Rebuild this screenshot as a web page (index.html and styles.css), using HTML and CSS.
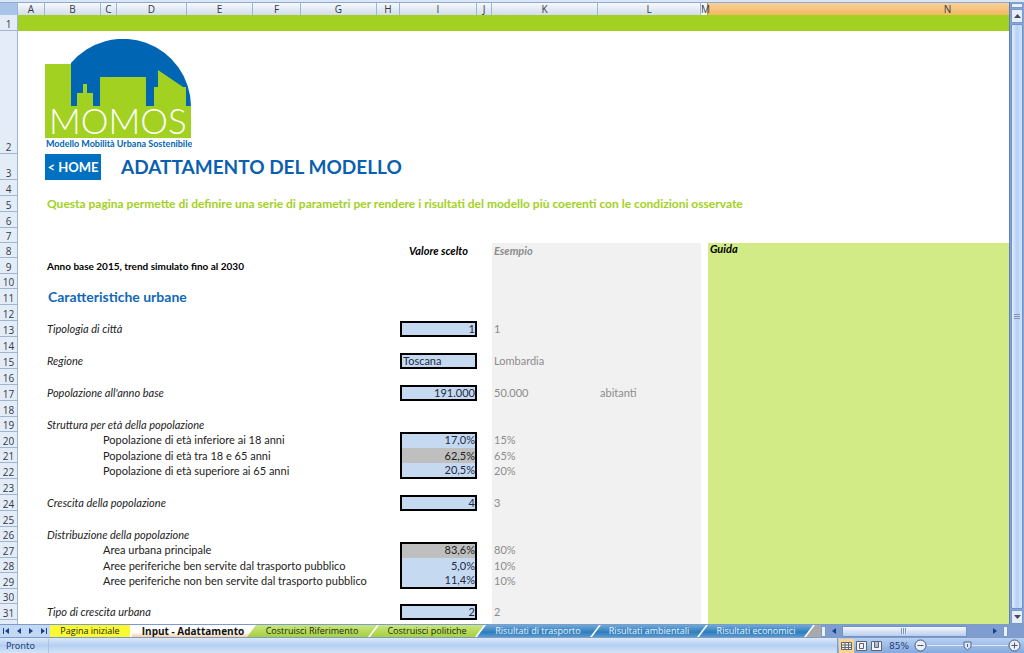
FILE: index.html
```html
<!DOCTYPE html>
<html lang="it">
<head>
<meta charset="utf-8">
<title>MOMOS - Adattamento del modello</title>
<link rel="stylesheet" href="styles.css">
</head>
<body>
<main class="workspace">
<div class="sheet">
<table class="grid">
<colgroup><col class="w-head"><col class="w-a"><col class="w-b"><col class="w-c"><col class="w-d"><col class="w-e"><col class="w-f"><col class="w-g"><col class="w-h"><col class="w-i"><col class="w-j"><col class="w-k"><col class="w-l"><col class="w-m"><col></colgroup>
<thead>
<tr><th class="corner"></th><th>A</th><th>B</th><th>C</th><th>D</th><th>E</th><th>F</th><th>G</th><th>H</th><th>I</th><th>J</th><th>K</th><th>L</th><th class="edge">M</th><th class="selected">N</th></tr>
</thead>
<tbody>
<tr><th>1</th><td colspan="14" class="band"></td></tr>
<tr class="r-logo"><th>2</th><td></td><td colspan="13" class="logo-cell">
<svg class="logo" viewBox="0 0 147 110" role="img" aria-label="MOMOS">
<path d="M26 67V24A68 68 0 0 1 146 67Z" fill="#0066b3"/>
<path d="M0 25H26V67H32V54H38V45H42V54H48V67H55V38H101V67H109V48H113V31L138 48H141V67H146V99H0Z" fill="#a2d122"/>
<text x="4" y="95" class="logo-name">MOMOS</text>
<text x="1" y="108" class="logo-tag">Modello Mobilità Urbana Sostenibile</text>
</svg></td></tr>
<tr class="r-title"><th>3</th><td></td><td class="home-cell"><a class="home" href="#">&lt; HOME</a></td><td></td><td colspan="11" class="title">ADATTAMENTO DEL MODELLO</td></tr>
<tr><th>4</th><td colspan="14"></td></tr>
<tr><th>5</th><td></td><td colspan="13" class="intro">Questa pagina permette di definire una serie di parametri per rendere i risultati del modello più coerenti con le condizioni osservate</td></tr>
<tr><th>6</th><td colspan="14"></td></tr>
<tr class="low"><th>7</th><td colspan="14"></td></tr>
<tr class="low"><th>8</th><td colspan="8"></td><td class="col-title">Valore scelto</td><td></td><td colspan="2" class="ex ex-title">Esempio</td><td></td><td class="guide">Guida</td></tr>
<tr><th>9</th><td></td><td colspan="9" class="strong">Anno base 2015, trend simulato fino al 2030</td><td colspan="2" class="ex"></td><td></td><td class="guide"></td></tr>
<tr class="low"><th>10</th><td colspan="10"></td><td colspan="2" class="ex"></td><td></td><td class="guide"></td></tr>
<tr><th>11</th><td></td><td colspan="9" class="section">Caratteristiche urbane</td><td colspan="2" class="ex"></td><td></td><td class="guide"></td></tr>
<tr><th>12</th><td colspan="10"></td><td colspan="2" class="ex"></td><td></td><td class="guide"></td></tr>
<tr><th>13</th><td></td><td colspan="7" class="label"><label for="tipologia">Tipologia di città</label></td><td class="box"><input id="tipologia" value="1"></td><td></td><td colspan="2" class="ex">1</td><td></td><td class="guide"></td></tr>
<tr><th>14</th><td colspan="10"></td><td colspan="2" class="ex"></td><td></td><td class="guide"></td></tr>
<tr><th>15</th><td></td><td colspan="7" class="label"><label for="regione">Regione</label></td><td class="box"><input id="regione" class="text" value="Toscana"></td><td></td><td colspan="2" class="ex">Lombardia</td><td></td><td class="guide"></td></tr>
<tr><th>16</th><td colspan="10"></td><td colspan="2" class="ex"></td><td></td><td class="guide"></td></tr>
<tr><th>17</th><td></td><td colspan="7" class="label"><label for="popolazione">Popolazione all'anno base</label></td><td class="box"><input id="popolazione" value="191.000"></td><td></td><td class="ex">50.000</td><td class="ex">abitanti</td><td></td><td class="guide"></td></tr>
<tr><th>18</th><td colspan="10"></td><td colspan="2" class="ex"></td><td></td><td class="guide"></td></tr>
<tr class="low"><th>19</th><td></td><td colspan="9" class="label">Struttura per età della popolazione</td><td colspan="2" class="ex"></td><td></td><td class="guide"></td></tr>
<tr><th>20</th><td colspan="2"></td><td colspan="6" class="sub"><label for="eta1">Popolazione di età inferiore ai 18 anni</label></td><td class="box"><input id="eta1" class="first" value="17,0%"></td><td></td><td colspan="2" class="ex">15%</td><td></td><td class="guide"></td></tr>
<tr class="low"><th>21</th><td colspan="2"></td><td colspan="6" class="sub"><label for="eta2">Popolazione di età tra 18 e 65 anni</label></td><td class="box"><input id="eta2" class="middle computed" value="62,5%" readonly></td><td></td><td colspan="2" class="ex">65%</td><td></td><td class="guide"></td></tr>
<tr><th>22</th><td colspan="2"></td><td colspan="6" class="sub"><label for="eta3">Popolazione di età superiore ai 65 anni</label></td><td class="box"><input id="eta3" class="last" value="20,5%"></td><td></td><td colspan="2" class="ex">20%</td><td></td><td class="guide"></td></tr>
<tr><th>23</th><td colspan="10"></td><td colspan="2" class="ex"></td><td></td><td class="guide"></td></tr>
<tr><th>24</th><td></td><td colspan="7" class="label"><label for="crescita">Crescita della popolazione</label></td><td class="box"><input id="crescita" value="4"></td><td></td><td colspan="2" class="ex">3</td><td></td><td class="guide"></td></tr>
<tr><th>25</th><td colspan="10"></td><td colspan="2" class="ex"></td><td></td><td class="guide"></td></tr>
<tr class="low"><th>26</th><td></td><td colspan="9" class="label">Distribuzione della popolazione</td><td colspan="2" class="ex"></td><td></td><td class="guide"></td></tr>
<tr><th>27</th><td colspan="2"></td><td colspan="6" class="sub"><label for="area1">Area urbana principale</label></td><td class="box"><input id="area1" class="first computed" value="83,6%" readonly></td><td></td><td colspan="2" class="ex">80%</td><td></td><td class="guide"></td></tr>
<tr class="low"><th>28</th><td colspan="2"></td><td colspan="6" class="sub"><label for="area2">Aree periferiche ben servite dal trasporto pubblico</label></td><td class="box"><input id="area2" class="middle" value="5,0%"></td><td></td><td colspan="2" class="ex">10%</td><td></td><td class="guide"></td></tr>
<tr><th>29</th><td colspan="2"></td><td colspan="6" class="sub"><label for="area3">Aree periferiche non ben servite dal trasporto pubblico</label></td><td class="box"><input id="area3" class="last" value="11,4%"></td><td></td><td colspan="2" class="ex">10%</td><td></td><td class="guide"></td></tr>
<tr class="low"><th>30</th><td colspan="10"></td><td colspan="2" class="ex"></td><td></td><td class="guide"></td></tr>
<tr><th>31</th><td></td><td colspan="7" class="label"><label for="tipo">Tipo di crescita urbana</label></td><td class="box"><input id="tipo" value="2"></td><td></td><td colspan="2" class="ex">2</td><td></td><td class="guide"></td></tr>
<tr><th></th><td colspan="10"></td><td colspan="2" class="ex"></td><td></td><td class="guide"></td></tr>
</tbody>
</table>
</div>
<div class="vscroll">
<span class="split"></span>
<button class="arrow" aria-label="Su"><svg viewBox="0 0 7 4"><path d="M0 4L3.500 0L7 4Z"/></svg></button>
<div class="vthumb"><i class="grip"></i></div>
<button class="arrow" aria-label="Giù"><svg viewBox="0 0 7 4"><path d="M0 0H7L3.500 4Z"/></svg></button>
</div>
</main>
<div class="tabbar">
<div class="tabnav">
<button aria-label="Primo foglio"><svg viewBox="0 0 6 6"><path d="M0 0H1V6H0ZM6 0V6L2 3Z"/></svg></button>
<button aria-label="Foglio precedente"><svg viewBox="0 0 6 6"><path d="M5 0V6L1 3Z"/></svg></button>
<button aria-label="Foglio successivo"><svg viewBox="0 0 6 6"><path d="M1 0V6L5 3Z"/></svg></button>
<button aria-label="Ultimo foglio"><svg viewBox="0 0 6 6"><path d="M5 0H6V6H5ZM0 0V6L4 3Z"/></svg></button>
</div>
<nav class="tabs">
<a href="#" class="tab yellow">Pagina iniziale</a>
<a href="#" class="tab active">Input - Adattamento</a>
<a href="#" class="tab green wide">Costruisci Riferimento</a>
<a href="#" class="tab green">Costruisci politiche</a>
<a href="#" class="tab blue medium">Risultati di trasporto</a>
<a href="#" class="tab blue">Risultati ambientali</a>
<a href="#" class="tab blue">Risultati economici</a>
<span class="tab rest"></span>
</nav>
<div class="hscroll">
<span class="handle"></span>
<button aria-label="Sinistra"><svg viewBox="0 0 6 6"><path d="M5 0V6L1 3Z"/></svg></button>
<div class="track"><div class="hthumb"><i class="grip upright"></i></div></div>
<button aria-label="Destra"><svg viewBox="0 0 6 6"><path d="M1 0V6L5 3Z"/></svg></button>
<span class="handle"></span>
</div>
</div>
<footer class="status">
<span class="state">Pronto</span>
<div class="view">
<button class="mode on" aria-label="Normale"><svg viewBox="0 0 11 10"><path d="M.5 1.500H10.500V8.500H.5ZM.5 4H10.500M.5 6.500H10.500M4 1V9M7.500 1V9"/></svg></button>
<button class="mode" aria-label="Layout di pagina"><svg viewBox="0 0 11 10"><path d="M.5 .5H10.500V9.500H.5ZM3.500 2.500H7.500V7.500H3.500Z"/></svg></button>
<button class="mode" aria-label="Anteprima interruzioni"><svg viewBox="0 0 11 10"><path d="M.5 .5H10.500V9.500H.5ZM3.500 .5V6.500H7.500V.5"/></svg></button>
<span class="percent">85%</span>
<button class="zoom" aria-label="Zoom indietro"><svg viewBox="0 0 13 13"><circle cx="6.500" cy="6.500" r="5.500"/><path d="M3.500 6.500H9.500"/></svg></button>
<div class="slider"><svg viewBox="0 0 9 10"><path d="M1 1H8V6L4.500 9L1 6ZM4.500 3V6"/></svg></div>
<button class="zoom" aria-label="Zoom avanti"><svg viewBox="0 0 13 13"><circle cx="6.500" cy="6.500" r="5.500"/><path d="M3.500 6.500H9.500M6.500 3.500V9.500"/></svg></button>
</div>
</footer>
</body>
</html>
```
FILE: styles.css
```css
* { box-sizing: border-box; }

body {
  margin: 0;
  height: 100vh;
  display: flex;
  flex-direction: column;
  overflow: hidden;
  font-family: "Century Gothic", Lato, sans-serif;
  font-size: 11px;
  color: #222;
  background: #fff;
}

button {
  border: 0;
  padding: 0;
  background: none;
  display: flex;
  align-items: center;
  justify-content: center;
}

svg { display: block; }

/* Worksheet */
.workspace {
  flex: 1;
  min-height: 0;
  display: flex;
  border-top: 2px solid #d9e6f7;
}

.sheet {
  flex: 1;
  min-width: 0;
  overflow: hidden;
}

.grid {
  table-layout: fixed;
  width: 100%;
  min-width: 1188px;
  border-collapse: separate;
  border-spacing: 0;
}

.w-head { width: 18px; }
.w-a { width: 27px; }
.w-b { width: 56px; }
.w-c { width: 16px; }
.w-d { width: 70px; }
.w-e { width: 66px; }
.w-f { width: 48px; }
.w-g { width: 76px; }
.w-h { width: 23px; }
.w-i { width: 77px; }
.w-j { width: 15px; }
.w-k { width: 106px; }
.w-l { width: 103px; }
.w-m { width: 7px; }

tr {
  --row: 16px;
  height: var(--row);
}
.low { --row: 15px; }
.r-logo { --row: 123px; }
.r-title { --row: 26px; }
thead tr { --row: 13px; }

td {
  padding: 0 2px;
  white-space: nowrap;
  line-height: 14px;
  vertical-align: middle;
}

th {
  padding: 0;
  font: 10px/12px "Open Sans", sans-serif;
  color: #333b48;
}

thead th {
  background: linear-gradient(#f6f9fd, #d3dced);
  border-top: 1px solid #93a9cb;
  border-right: 1px solid #9eb6d6;
  line-height: 11px;
}
thead .corner { background: #a9c4e9; }
thead .edge { background: #f4f7fb; border-right-color: #c98d3a; }
thead .selected { background: linear-gradient(#f9d099, #f3b862); }

tbody th {
  vertical-align: bottom;
  background: #e4ecf7;
  border-right: 1px solid #9eb6d6;
  border-bottom: 1px solid #9eb6d6;
}

.band { background: #a2d122; }

.logo-cell {
  padding: 8px 0 0;
  vertical-align: top;
}
.logo { width: 147px; height: 110px; }
.logo-name {
  font-family: "Century Gothic", Lato, sans-serif;
  font-size: 35px;
  font-weight: 300;
  fill: #fff;
}
.logo-tag {
  font-family: "Century Gothic", Lato, sans-serif;
  font-size: 9px;
  font-weight: 700;
  fill: #0066b3;
}

.home-cell { padding: 0; }
.home {
  display: block;
  background: #0070c0;
  color: #fff;
  font-size: 13px;
  font-weight: 700;
  line-height: 26px;
  text-align: center;
  text-decoration: none;
}

.title {
  padding-left: 4px;
  font-size: 19px;
  font-weight: 700;
  line-height: 24px;
  color: #0b5fb0;
}
.intro { font-weight: 700; font-size: 12px; color: #a2d122; }
.strong { font-weight: 700; font-size: 10px; color: #000; }
.section {
  padding-left: 3px;
  font-size: 14px;
  font-weight: 700;
  color: #1068b8;
}
.label { font-style: italic; }
.col-title {
  text-align: center;
  font-weight: 700;
  font-style: italic;
  color: #000;
}
.ex { background: #f1f1f1; color: #8c8c8c; }
.ex-title { font-style: italic; font-weight: 700; }
.guide {
  background: #d3eb86;
  font-weight: 700;
  font-style: italic;
  line-height: 12px;
  vertical-align: top;
  color: #000;
}

.box { padding: 0; }
.box input {
  display: block;
  width: 100%;
  height: var(--row);
  border: 2px solid #000;
  border-radius: 0;
  padding: 0 0 1px 1px;
  background: #c5d9f1;
  color: #1c2a44;
  font: inherit;
  line-height: 11px;
  text-align: right;
  outline: 0;
}
.box .text { text-align: left; }
.box .first { border-bottom: 0; padding-bottom: 3px; }
.box .middle { border-top: 0; border-bottom: 0; }
.box .last { border-top: 0; }
.box .computed { background: #bfbfbf; color: #222; }

/* Vertical scroll bar */
.vscroll {
  width: 15px;
  display: flex;
  flex-direction: column;
  padding: 1px 1px 0;
  background: #87a5d4;
  border-left: 1px solid #5b7fb9;
}
.split {
  height: 5px;
  margin-bottom: 1px;
  background: #e9f1fb;
  border: 1px solid #7b99c8;
}
.arrow {
  height: 14px;
  background: #e6eefa;
  border: 1px solid #7b99c8;
}
.arrow svg { width: 7px; height: 4px; fill: #444c5c; }
.vthumb {
  flex: 1;
  margin: 1px 0;
  display: flex;
  align-items: center;
  justify-content: center;
  background: linear-gradient(90deg, #e2edfc, #b5d0f5 50%, #d2e4fb);
  border: 1px solid #6f92c8;
  border-radius: 2px;
}
.grip {
  width: 6px;
  height: 6px;
  background: repeating-linear-gradient(#7f97c0 0 1px, #c4d3ea 1px 2px);
}
.upright { background: repeating-linear-gradient(90deg, #7f97c0 0 1px, #e3ebf7 1px 2px); }

/* Sheet tabs */
.tabbar {
  height: 14px;
  display: flex;
  background: #c3d8f4;
  border-top: 1px solid #7f9cc9;
  border-bottom: 1px solid #7f9cc9;
}
.tabnav {
  width: 50px;
  display: flex;
  align-items: center;
  justify-content: space-around;
}
.tabnav svg, .hscroll svg { width: 6px; height: 6px; fill: #17428b; }

.tabs {
  flex: 1;
  min-width: 0;
  display: flex;
  overflow: hidden;
  background: #fff;
}
.tab {
  flex: none;
  width: 114px;
  height: 12px;
  margin-right: -7px;
  font: 9px/12px "Open Sans", sans-serif;
  color: #1c2a10;
  text-align: center;
  text-decoration: none;
  white-space: nowrap;
  clip-path: polygon(9px 0, 100% 0, calc(100% - 9px) 100%, 0 100%);
}
.medium { width: 122px; }
.wide { width: 130px; }
.yellow {
  width: 80px;
  margin-right: 2px;
  background: #fcf832;
  clip-path: none;
}
.active {
  width: 122px;
  background: linear-gradient(#fff 60%, #f9cf9a);
  font-weight: 700;
  font-size: 10px;
  color: #111;
  clip-path: none;
}
.green { background: linear-gradient(#c9e580, #a5d03c); }
.blue { background: linear-gradient(#6fa9d8, #2f7dbd 60%, #5b9ace); color: #e6f1fb; }
.rest { width: 40px; background: #a9a9a9; }

.hscroll {
  width: 203px;
  display: flex;
  align-items: center;
  background: #7f9dce;
  padding-right: 16px;
}
.hscroll button { width: 16px; height: 12px; }
.handle {
  width: 5px;
  height: 11px;
  background: #e9f1fb;
  border: 1px solid #7b99c8;
}
.track { flex: 1; display: flex; }
.hthumb {
  width: 86%;
  height: 11px;
  display: flex;
  align-items: center;
  justify-content: center;
  background: linear-gradient(#f3f7fd, #b9cfee);
  border: 1px solid #6f92c8;
}

/* Status bar */
.status {
  height: 15px;
  display: flex;
  align-items: center;
  justify-content: space-between;
  background: linear-gradient(#dbe8fa, #b5cff1 50%, #d3e3f8);
  font: 9px/14px "DejaVu Sans", sans-serif;
  color: #1d3f78;
}
.state {
  width: 49px;
  padding-left: 6px;
  border-right: 1px solid #a9c3e8;
}
.view {
  width: 187px;
  height: 15px;
  padding: 0 3px 0 1px;
  display: flex;
  align-items: center;
  background: linear-gradient(#b8d0f3, #84a9de);
  border-left: 1px solid #7f9cc9;
}
.mode { width: 15px; height: 14px; }
.mode svg {
  width: 11px;
  height: 10px;
  fill: #f2f2f2;
  stroke: #5f6470;
}
.on { background: #fbd58b; }
.percent { width: 30px; text-align: center; }
.zoom svg {
  width: 13px;
  height: 13px;
  fill: #e8effa;
  stroke: #4c5870;
}
.slider {
  flex: 1;
  display: flex;
  justify-content: center;
  background: linear-gradient(#dce8fa, #dce8fa) center / 100% 1px no-repeat;
}
.slider svg {
  width: 9px;
  height: 10px;
  fill: #dce6f5;
  stroke: #53688f;
}
```
